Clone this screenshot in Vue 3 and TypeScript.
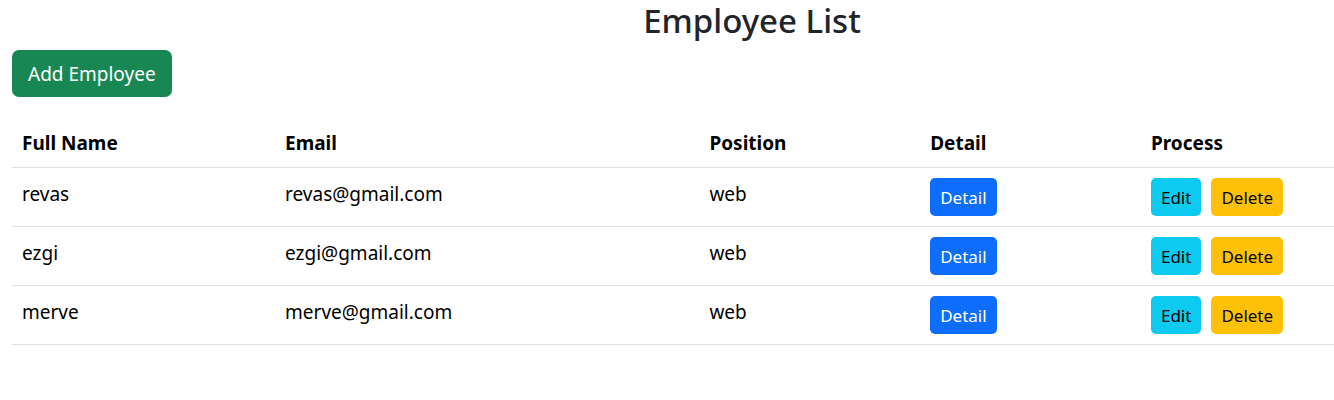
<script setup lang="ts">
interface Employee {
  name: string
  email: string
  position: string
}

const employees: Employee[] = [
  { name: 'revas', email: 'revas@gmail.com', position: 'web' },
  { name: 'ezgi', email: 'ezgi@gmail.com', position: 'web' },
  { name: 'merve', email: 'merve@gmail.com', position: 'web' },
]
</script>

<template>
  <main class="page">
    <h1 class="title">Employee List</h1>
    <button type="button" class="btn btn-add">Add Employee</button>
    <table class="table">
      <colgroup>
        <col class="col-name" />
        <col class="col-email" />
        <col class="col-position" />
        <col class="col-detail" />
        <col />
      </colgroup>
      <thead>
        <tr>
          <th scope="col">Full Name</th>
          <th scope="col">Email</th>
          <th scope="col">Position</th>
          <th scope="col">Detail</th>
          <th scope="col">Process</th>
        </tr>
      </thead>
      <tbody>
        <tr v-for="employee in employees" :key="employee.email">
          <td>{{ employee.name }}</td>
          <td>{{ employee.email }}</td>
          <td>{{ employee.position }}</td>
          <td><button type="button" class="btn btn-sm btn-detail">Detail</button></td>
          <td>
            <div class="actions">
              <button type="button" class="btn btn-sm btn-edit">Edit</button>
              <button type="button" class="btn btn-sm btn-delete">Delete</button>
            </div>
          </td>
        </tr>
      </tbody>
    </table>
  </main>
</template>

<style>
body {
  margin: 0;
  background: #fff;
}
</style>

<style scoped>
.page {
  padding-left: 12px;
  color: #212529;
  font-family: "Segoe UI", "Noto Sans", "Open Sans", sans-serif;
  font-size: 19px;
  line-height: 29px;
}

.title {
  margin: 0;
  padding: 0 0 8px 158px;
  font-size: 33px;
  font-weight: 500;
  line-height: 42px;
  text-align: center;
}

.btn {
  display: block;
  border: 0;
  font-family: inherit;
  cursor: pointer;
}

.btn-add {
  margin-bottom: 21px;
  padding: 10px 16px 8px;
  border-radius: 7px;
  background: #198754;
  color: #fff;
  font-size: 19px;
  line-height: 29px;
}

.table {
  width: 100%;
  border-collapse: collapse;
  table-layout: fixed;
  color: #000;
}

.col-name {
  width: 19.9%;
}

.col-email {
  width: 32.1%;
}

.col-position,
.col-detail {
  width: 16.7%;
}

th,
td {
  padding: 10px;
  border-bottom: 1px solid #dee2e6;
  text-align: left;
  vertical-align: top;
}

th {
  padding: 11px 10px 9px;
  font-weight: 700;
}

td:nth-child(-n + 3) {
  padding-top: 12px;
  padding-bottom: 8px;
}

.actions {
  display: flex;
  gap: 10px;
}

.btn-sm {
  padding: 6px 10px 4px;
  border-radius: 5px;
  color: #000;
  font-size: 17px;
  line-height: 28px;
}

.btn-detail {
  background: #0d6efd;
  color: #fff;
}

.btn-edit {
  background: #0dcaf0;
}

.btn-delete {
  background: #ffc107;
}
</style>
